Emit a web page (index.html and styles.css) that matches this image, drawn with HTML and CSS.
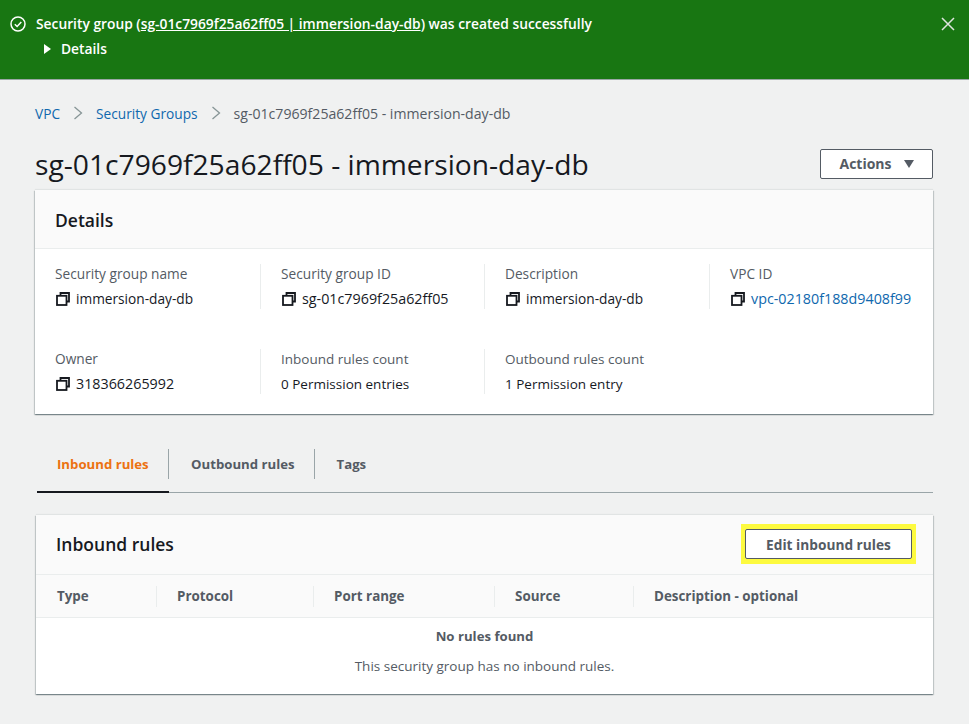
FILE: index.html
```html
<!DOCTYPE html>
<html>
<head lang="en">
    <meta charset="UTF-8">
    <title>Security group</title>
    <link rel="stylesheet" href="styles.css">
</head>
<body>
    <div class="flash">
        <svg class="flash-icon" width="16" height="16" viewBox="0 0 16 16"><circle cx="8" cy="8" r="7" /><path d="M4.8 8.2l2.3 2.3 4.2-4.6" /></svg>
        <div class="flash-text">
            <div>Security group (<a href="#">sg-01c7969f25a62ff05 | immersion-day-db</a>) was created successfully</div>
            <div class="flash-details"><i class="tri"></i>Details</div>
        </div>
        <svg class="flash-close" width="14" height="14" viewBox="0 0 14 14"><path d="M1 1l12 12M13 1L1 13" /></svg>
    </div>

    <div class="main">
        <div class="crumbs">
            <a href="#">VPC</a>
            <svg class="crumb-sep" width="10" height="16" viewBox="0 0 10 16"><path d="M1.5 2l7 6-7 6" /></svg>
            <a href="#">Security Groups</a>
            <svg class="crumb-sep" width="10" height="16" viewBox="0 0 10 16"><path d="M1.5 2l7 6-7 6" /></svg>
            <span>sg-01c7969f25a62ff05 - immersion-day-db</span>
        </div>

        <div class="title-row">
            <h1>sg-01c7969f25a62ff05 - immersion-day-db</h1>
            <button class="btn btn-actions">Actions<i class="caret"></i></button>
        </div>

        <div class="panel">
            <div class="panel-head"><h2>Details</h2></div>
            <div class="details">
                <div class="cell">
                    <label>Security group name</label>
                    <div class="val"><svg class="copy" width="14" height="14" viewBox="0 0 14 14"><path d="M4.500 3.500v-2.500h8.500v8.500h-2.500" /><rect x="1" y="3.800" width="9.500" height="9.200" /></svg>immersion-day-db</div>
                </div>
                <div class="cell">
                    <label>Security group ID</label>
                    <div class="val"><svg class="copy" width="14" height="14" viewBox="0 0 14 14"><path d="M4.500 3.500v-2.500h8.500v8.500h-2.500" /><rect x="1" y="3.800" width="9.500" height="9.200" /></svg><span class="num">sg-01c7969f25a62ff05</span></div>
                </div>
                <div class="cell">
                    <label>Description</label>
                    <div class="val"><svg class="copy" width="14" height="14" viewBox="0 0 14 14"><path d="M4.500 3.500v-2.500h8.500v8.500h-2.500" /><rect x="1" y="3.800" width="9.500" height="9.200" /></svg>immersion-day-db</div>
                </div>
                <div class="cell">
                    <label>VPC ID</label>
                    <div class="val"><svg class="copy" width="14" height="14" viewBox="0 0 14 14"><path d="M4.500 3.500v-2.500h8.500v8.500h-2.500" /><rect x="1" y="3.800" width="9.500" height="9.200" /></svg><a class="num" href="#">vpc-02180f188d9408f99</a></div>
                </div>
                <div class="cell">
                    <label>Owner</label>
                    <div class="val"><svg class="copy" width="14" height="14" viewBox="0 0 14 14"><path d="M4.500 3.500v-2.500h8.500v8.500h-2.500" /><rect x="1" y="3.800" width="9.500" height="9.200" /></svg><span class="num">318366265992</span></div>
                </div>
                <div class="cell small">
                    <label>Inbound rules count</label>
                    <div class="val">0 Permission entries</div>
                </div>
                <div class="cell small">
                    <label>Outbound rules count</label>
                    <div class="val">1 Permission entry</div>
                </div>
            </div>
        </div>

        <div class="tabs">
            <div class="tab selected"><span>Inbound rules</span></div>
            <div class="tab"><span>Outbound rules</span></div>
            <div class="tab last"><span>Tags</span></div>
        </div>

        <div class="panel rules">
            <div class="panel-head rules-head">
                <h2>Inbound rules</h2>
                <div class="highlight"><button class="btn btn-edit">Edit inbound rules</button></div>
            </div>
            <div class="thead">
                <div class="th th-type">Type</div>
                <div class="th th-proto">Protocol</div>
                <div class="th th-port">Port range</div>
                <div class="th th-source">Source</div>
                <div class="th th-desc">Description - optional</div>
            </div>
            <div class="empty">
                <b>No rules found</b>
                <p>This security group has no inbound rules.</p>
            </div>
        </div>
    </div>
</body>
</html>
```

FILE: styles.css
```css
* {
    margin: 0;
    padding: 0;
    box-sizing: border-box;
}
body {
    background-color: #f0f1f1;
    color: #16191f;
    font-family: "Open Sans", "Noto Sans", sans-serif;
    font-size: 13.7px;
}
a {
    color: #0f68ae;
    text-decoration: none;
}

.flash {
    display: flex;
    height: 80px;
    padding: 15px 14px 0 10px;
    background-color: #187612;
    border-bottom: 1px solid #9aa7a5;
    color: #fff;
    font-size: 13.8px;
    font-weight: 600;
    line-height: 18px;
}
.flash a {
    color: #fff;
    text-decoration: underline;
}
.flash-icon {
    flex: none;
    margin: 1px 10px 0 0;
    fill: none;
    stroke: #fff;
    stroke-width: 1.5;
}
.flash-text {
    flex: 1;
}
.flash-details {
    display: flex;
    align-items: center;
    margin-top: 7px;
    padding-left: 8px;
}
.tri {
    width: 0;
    height: 0;
    margin-right: 10px;
    border-left: 7px solid #fff;
    border-top: 5px solid transparent;
    border-bottom: 5px solid transparent;
}
.flash-close {
    flex: none;
    margin-top: 2px;
    fill: none;
    stroke: #dfe5df;
    stroke-width: 1.5;
}

.main {
    height: 644px;
    padding: 0 36px 0 35px;
}
.crumbs {
    display: flex;
    align-items: center;
    height: 20px;
    margin-top: 23px;
}
.crumbs span {
    color: #545b64;
    font-size: 14.1px;
}
.crumb-sep {
    margin: 0 13px;
    fill: none;
    stroke: #879596;
    stroke-width: 1.3;
}
.title-row {
    display: flex;
    justify-content: space-between;
    align-items: center;
    height: 30px;
    margin-top: 26px;
}
h1 {
    font-size: 28.2px;
    font-weight: 400;
    line-height: 30px;
}
.btn {
    background-color: #fff;
    border: 1px solid #545b64;
    border-radius: 2px;
    color: #545b64;
    font-family: inherit;
    font-size: 13.7px;
    font-weight: 700;
}
.btn-actions {
    display: flex;
    justify-content: center;
    align-items: center;
    width: 113px;
    height: 30px;
    padding-bottom: 1px;
    font-size: 14px;
}
.caret {
    width: 0;
    height: 0;
    margin-left: 12px;
    border-top: 8px solid #545b64;
    border-left: 5px solid transparent;
    border-right: 5px solid transparent;
}

.panel {
    margin-top: 11px;
    background-color: #fff;
    box-shadow: 0 1px 1px 0 rgba(0, 28, 36, 0.3), 1px 1px 1px 0 rgba(0, 28, 36, 0.15), -1px 1px 1px 0 rgba(0, 28, 36, 0.15), 0 -1px 1px 0 rgba(0, 28, 36, 0.06);
}
.panel-head {
    height: 59px;
    padding: 20px 20px 0;
    background-color: #fafafa;
    border-bottom: 1px solid #eaeded;
}
h2 {
    font-size: 17.5px;
    font-weight: 600;
    line-height: 20px;
}
.details {
    display: grid;
    grid-template-columns: 206px 224px 225px 1fr;
    align-content: start;
    row-gap: 40px;
    height: 165px;
    padding: 15px 0 0 20px;
}
.cell {
    height: 45px;
    line-height: 20px;
    border-right: 1px solid #eaeded;
    padding-left: 20px;
}
.cell:nth-child(4n+1) {
    padding-left: 0;
}
.cell:nth-child(4),
.cell:nth-child(7) {
    border-right: none;
}
.cell label {
    display: block;
    color: #545b64;
}
.small {
    font-size: 13.5px;
}
.val {
    display: flex;
    align-items: center;
    margin-top: 5px;
    white-space: nowrap;
}
.num {
    font-size: 14.3px;
}
.copy {
    flex: none;
    margin: 0 6px 0 1px;
    fill: none;
    stroke: #16191f;
    stroke-width: 1.8;
}

.tabs {
    display: flex;
    height: 44px;
    margin: 35px 0 0 2px;
    border-bottom: 1px solid #9aa5a8;
    color: #545b64;
    font-size: 13.2px;
    font-weight: 700;
    white-space: nowrap;
}
.tab {
    height: 44px;
}
.tab span {
    display: block;
    height: 30px;
    padding: 5px 19px 0 22px;
    border-right: 1px solid #9aa5a8;
    line-height: 20px;
}
.tab.selected {
    width: 132px;
    color: #ec7211;
    border-bottom: 2px solid #16191f;
}
.tab.selected span {
    width: 132px;
    padding-left: 20px;
}
.tab.last span {
    border-right: none;
}

.rules {
    height: 179px;
    margin: 22px 0 0 1px;
}
.rules-head {
    display: flex;
    justify-content: space-between;
    align-items: flex-start;
    height: 60px;
    padding: 9px 17px 0 20px;
}
.rules-head h2 {
    margin-top: 10px;
}
.highlight {
    padding: 5px 4px;
    background-color: #fdfa3f;
}
.btn-edit {
    display: block;
    width: 167px;
    height: 30px;
}
.thead {
    display: flex;
    align-items: center;
    height: 43px;
    background-color: #fafafa;
    border-bottom: 1px solid #eaeded;
    color: #545b64;
    font-weight: 700;
    font-size: 13.4px;
}
.th {
    height: 21px;
    padding-left: 20px;
    line-height: 21px;
    border-right: 1px solid #eaeded;
}
.th-type { width: 121px; padding-left: 21px; }
.th-proto { width: 157px; }
.th-port { width: 181px; }
.th-source { width: 139px; }
.th-desc { border-right: none; }
.empty {
    padding-top: 8px;
    text-align: center;
    line-height: 20px;
}
.empty b {
    color: #545b64;
    font-weight: 700;
    font-size: 13.2px;
}
.empty p {
    margin-top: 10px;
    color: #545b64;
    font-size: 13.5px;
}
```
